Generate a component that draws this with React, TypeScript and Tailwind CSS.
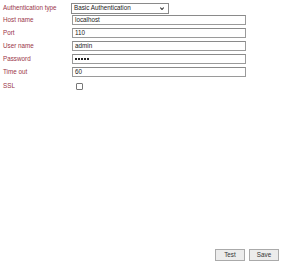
// Mail server settings form, rendered at small scale
const fields = [
  { label: 'Host name', value: 'localhost' },
  { label: 'Port', value: '110' },
  { label: 'User name', value: 'admin' },
  { label: 'Password', value: '', password: true },
  { label: 'Time out', value: '60' },
]

export default function App() {
  return (
    <div className="flex h-[264px] w-[283px] flex-col bg-white font-['Liberation_Sans',Arial,sans-serif] text-[6.3px] leading-none">
      <div className="flex flex-col pt-[3px]">
        <div className="flex h-[11px] items-center">
          <span className="w-[71px] pl-[3px] text-[#9a3548]">Authentication type</span>
          <div className="flex h-[11px] w-[98px] items-center justify-between border border-[#8a8a8a] bg-white px-[2px] text-[#222]">
            <span>Basic Authentication</span>
            <svg width="4" height="3" viewBox="0 0 4 3" className="mr-[2px]">
              <path d="M0.3 0.5 L2 2.5 L3.7 0.5" fill="none" stroke="#333" strokeWidth="1.1" />
            </svg>
          </div>
        </div>

        {fields.map((f, i) => (
          <div key={f.label} className={`flex h-[10px] items-center ${i === 0 ? 'mt-[1px]' : 'mt-[3px]'}`}>
            <span className="w-[72px] pl-[3px] text-[#9a3548]">{f.label}</span>
            <div className="flex h-[10px] w-[174px] items-center border border-[#9a9a9a] border-t-[#8a8a8a] bg-white px-[2px] text-[#222]">
              {f.password ? (
                <span className="flex gap-[1px]">
                  {[0, 1, 2, 3, 4].map((d) => (
                    <span key={d} className="h-[2px] w-[2px] bg-[#222]" />
                  ))}
                </span>
              ) : (
                f.value
              )}
            </div>
          </div>
        ))}

        <div className="mt-[5px] flex h-[8px] items-center">
          <span className="w-[76px] pl-[3px] text-[#9a3548]">SSL</span>
          <div className="h-[7px] w-[7px] rounded-[1px] border border-[#777] bg-white" />
        </div>
      </div>

      <div className="mt-auto flex justify-end gap-[4px] pb-[3px] pr-[4px]">
        <button className="h-[12px] w-[30px] border border-[#aaa] bg-[#ececec] text-[6.3px] text-[#333]">Test</button>
        <button className="h-[12px] w-[30px] border border-[#aaa] bg-[#ececec] text-[6.3px] text-[#333]">Save</button>
      </div>
    </div>
  )
}
